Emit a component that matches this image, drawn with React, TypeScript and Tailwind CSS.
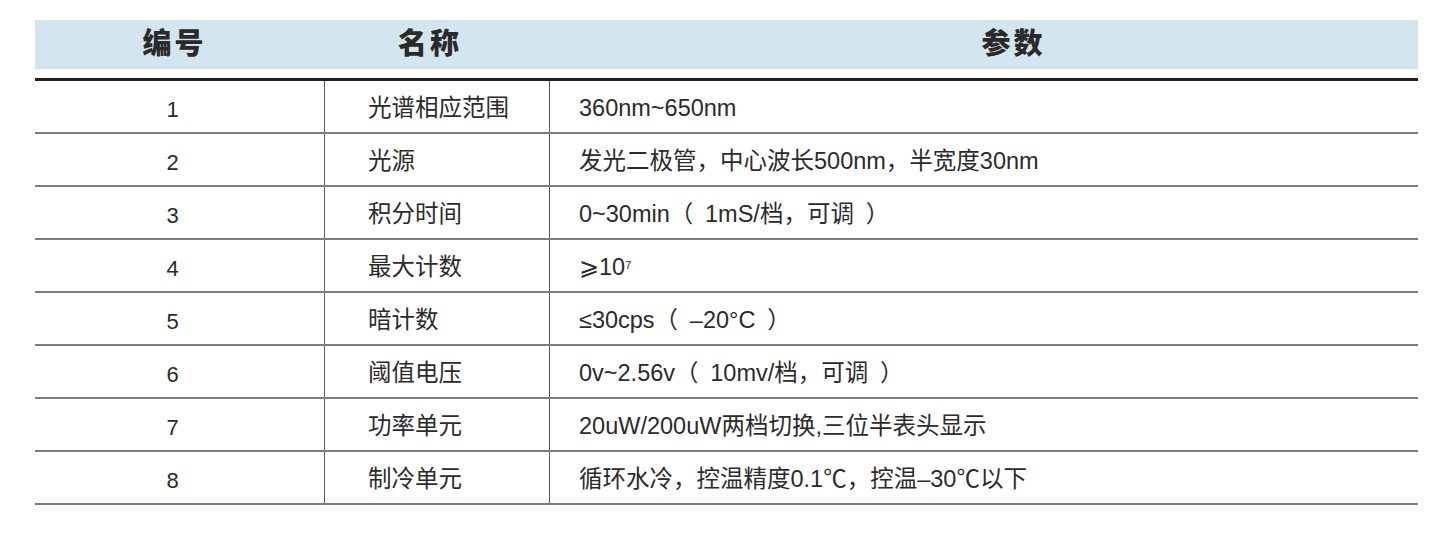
import React from "react";

const rows = [
  { no: "1", name: "光谱相应范围", param: <>360nm~650nm</> },
  { no: "2", name: "光源", param: <>发光二极管，中心波长500nm，半宽度30nm</> },
  { no: "3", name: "积分时间", param: <>0~30min（&ensp;1mS/档，可调&ensp;）</> },
  {
    no: "4",
    name: "最大计数",
    param: (
      <>
        ⩾10<sup className="text-[11px] relative -top-[3px]">7</sup>
      </>
    ),
  },
  { no: "5", name: "暗计数", param: <>≤30cps（&ensp;–20°C&ensp;）</> },
  { no: "6", name: "阈值电压", param: <>0v~2.56v（&ensp;10mv/档，可调&ensp;）</> },
  { no: "7", name: "功率单元", param: <>20uW/200uW两档切换,三位半表头显示</> },
  { no: "8", name: "制冷单元", param: <>循环水冷，控温精度0.1℃，控温–30℃以下</> },
];

export default function App() {
  return (
    <div
      className="min-h-screen bg-white pt-[20px] pl-[35px] text-[#2b2b2b]"
      style={{ fontFamily: '"Liberation Sans", "Noto Sans CJK SC", sans-serif' }}
    >
      <div className="w-[1383px]">
        {/* header */}
        <div className="grid grid-cols-[291px_225px_867px] h-[49px] bg-[#d3e6ef] text-[29px] font-black tracking-[3px] text-[#2a2a2a]">
          <div className="flex items-center justify-center pr-[12px]">编号</div>
          <div className="flex items-center justify-center pr-[17px]">名称</div>
          <div className="flex items-center justify-center pl-[58px]">参数</div>
        </div>
        <div className="mt-[9px] h-[3px] bg-[#231f20]" />

        {/* body */}
        {rows.map((r) => (
          <div
            key={r.no}
            className="grid grid-cols-[290px_225px_868px] h-[53px] border-b-2 border-[#7c7c7c] text-[23.5px]"
          >
            <div className="flex items-center justify-center pr-[14px] pt-[5px] border-r border-[#5a5a5a]">
              <span className="text-[22px]">{r.no}</span>
            </div>
            <div className="flex items-center pl-[43px] pt-[5px] border-r border-[#5a5a5a]">{r.name}</div>
            <div className="flex items-center pl-[29px] pt-[5px] whitespace-nowrap">{r.param}</div>
          </div>
        ))}
      </div>
    </div>
  );
}
